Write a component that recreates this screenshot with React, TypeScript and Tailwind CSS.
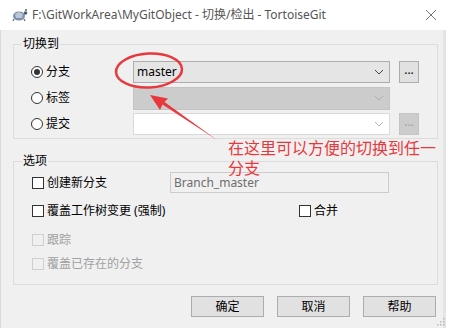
import React from 'react';

const font = { fontFamily: '"Noto Sans", "Noto Sans CJK SC", sans-serif' };

const Chevron = ({ color }: { color: string }) => (
  <svg width="10" height="6" viewBox="0 0 10 6" className="shrink-0">
    <path d="M1 1 L5 5 L9 1" fill="none" stroke={color} strokeWidth="1" />
  </svg>
);

const Radio = ({ checked, label }: { checked?: boolean; label: string }) => (
  <div className="flex items-center w-[102px] shrink-0">
    <div className="w-[12px] h-[12px] rounded-full border border-[#333] bg-white flex items-center justify-center">
      {checked && <div className="w-[6px] h-[6px] rounded-full bg-[#333]" />}
    </div>
    <span className="ml-[3px] text-[12px] text-black leading-none">{label}</span>
  </div>
);

const Check = ({ label, disabled }: { label: string; disabled?: boolean }) => (
  <div className="flex items-center">
    <div
      className={`w-[12px] h-[12px] border ${
        disabled ? 'border-[#cfcfcf] bg-[#f0f0f0]' : 'border-[#333] bg-white'
      }`}
    />
    <span className={`ml-[3px] text-[12px] leading-none ${disabled ? 'text-[#a0a0a0]' : 'text-black'}`}>
      {label}
    </span>
  </div>
);

const Group = ({ title, className, children }: { title: string; className: string; children: React.ReactNode }) => (
  <div className={`relative border border-[#dcdcdc] ${className}`}>
    <span className="absolute -top-[9px] left-[8px] px-[1px] bg-[#f0f0f0] text-[12px] leading-[16px] text-black">
      {title}
    </span>
    {children}
  </div>
);

export default function App() {
  return (
    <div className="relative w-[449px] h-[328px] bg-white overflow-hidden flex flex-col" style={font}>
      {/* title bar */}
      <div className="h-[30px] flex items-center pl-[11px] pr-[12px] shrink-0">
        <svg width="17" height="14" viewBox="0 0 17 14">
          <ellipse cx="8" cy="8" rx="6" ry="4.5" fill="#7d8fa8" />
          <path d="M4 6 L8 4 L12 6 L11 10 L5 10 Z" fill="#b9c6d6" />
          <circle cx="14.5" cy="5" r="1.8" fill="#4b5d78" />
          <circle cx="15" cy="2" r="1" fill="#2a7a3a" />
          <path d="M3 11 L2 13 M13 11 L14 13" stroke="#5a6c86" strokeWidth="1.2" />
        </svg>
        <span className="ml-[4px] text-[12px] text-[#555]">F:\GitWorkArea\MyGitObject - 切换/检出 - TortoiseGit</span>
        <svg width="12" height="12" viewBox="0 0 12 12" className="ml-auto">
          <path d="M1 1 L11 11 M11 1 L1 11" stroke="#777" strokeWidth="1" />
        </svg>
      </div>

      {/* dialog body */}
      <div className="flex-1 bg-[#f0f0f0] border-l border-[#dadada] border-r-[3px] border-r-[#e4e4e4] mr-[3px] pl-[12px] flex flex-col">
        <Group title="切换到" className="mt-[14px] w-[425px] h-[95px] pt-[16px] pl-[17px]">
          <div className="flex flex-col gap-[4px]">
            <div className="flex items-center h-[22px]">
              <Radio checked label="分支" />
              <div className="w-[257px] h-[22px] bg-[#e5e5e5] border border-[#adadad] flex items-center pl-[3px] pr-[5px]">
                <span className="text-[12px] text-black leading-none">master</span>
                <div className="ml-auto"><Chevron color="#444" /></div>
              </div>
              <div className="ml-[9px] w-[20px] h-[22px] bg-[#e1e1e1] border border-[#adadad] flex items-center justify-center text-[12px] leading-none text-black pb-[4px]">
                ...
              </div>
            </div>
            <div className="flex items-center h-[22px]">
              <Radio label="标签" />
              <div className="w-[257px] h-[23px] bg-[#cccccc] border border-[#c4c4c4] flex items-center pr-[5px]">
                <div className="ml-auto"><Chevron color="#b0b0b0" /></div>
              </div>
            </div>
            <div className="flex items-center h-[22px]">
              <Radio label="提交" />
              <div className="w-[257px] h-[22px] bg-white border border-[#d9d9d9] flex items-center pr-[5px]">
                <div className="ml-auto"><Chevron color="#b4b4b4" /></div>
              </div>
              <div className="ml-[9px] w-[20px] h-[22px] bg-[#cccccc] border border-[#c4c4c4] flex items-center justify-center text-[12px] leading-none text-[#a0a0a0] pb-[4px]">
                ...
              </div>
            </div>
          </div>
        </Group>

        <Group title="选项" className="mt-[22px] w-[425px] h-[124px] pt-[10px] pl-[18px]">
          <div className="flex items-center h-[21px]">
            <div className="w-[138px] shrink-0"><Check label="创建新分支" /></div>
            <div className="w-[219px] h-[21px] bg-[#f0f0f0] border border-[#cccccc] flex items-center pl-[3px]">
              <span className="text-[12px] text-[#6d6d6d] leading-none">Branch_master</span>
            </div>
          </div>
          <div className="flex items-center h-[14px] mt-[11px]">
            <div className="w-[267px] shrink-0"><Check label="覆盖工作树变更 (强制)" /></div>
            <Check label="合并" />
          </div>
          <div className="flex items-center h-[14px] mt-[15px]">
            <Check label="跟踪" disabled />
          </div>
          <div className="flex items-center h-[14px] mt-[10px]">
            <Check label="覆盖已存在的分支" disabled />
          </div>
        </Group>

        <div className="mt-[11px] flex gap-[13px] pl-[178px]">
          {['确定', '取消', '帮助'].map(t => (
            <div
              key={t}
              className="w-[73px] h-[21px] bg-[#e1e1e1] border border-[#adadad] flex items-center justify-center text-[12px] text-black leading-none"
            >
              {t}
            </div>
          ))}
        </div>
      </div>

      {/* size grip */}
      <svg width="9" height="9" viewBox="0 0 9 9" className="absolute right-[4px] bottom-[2px]">
        {[[7, 1], [4, 4], [7, 4], [1, 7], [4, 7], [7, 7]].map(([x, y]) => (
          <rect key={`${x}-${y}`} x={x} y={y} width="1.5" height="1.5" fill="#b8b8b8" />
        ))}
      </svg>

      {/* red annotation */}
      <svg width="449" height="328" viewBox="0 0 449 328" className="absolute inset-0 pointer-events-none">
        <ellipse cx="149" cy="70.5" rx="33" ry="17" fill="none" stroke="#e8383d" strokeWidth="2.5" transform="rotate(-3 149 70.5)" />
        <polygon points="150,95 168,98.5 164.5,102 217,140 162.5,104.5 160,110" fill="#e8383d" />
      </svg>
      <div className="absolute left-[228px] top-[138px] text-[16px] leading-[20px] text-[#e8383d] w-[216px]">
        在这里可以方便的切换到任一
        <br />
        分支
      </div>
    </div>
  );
}
